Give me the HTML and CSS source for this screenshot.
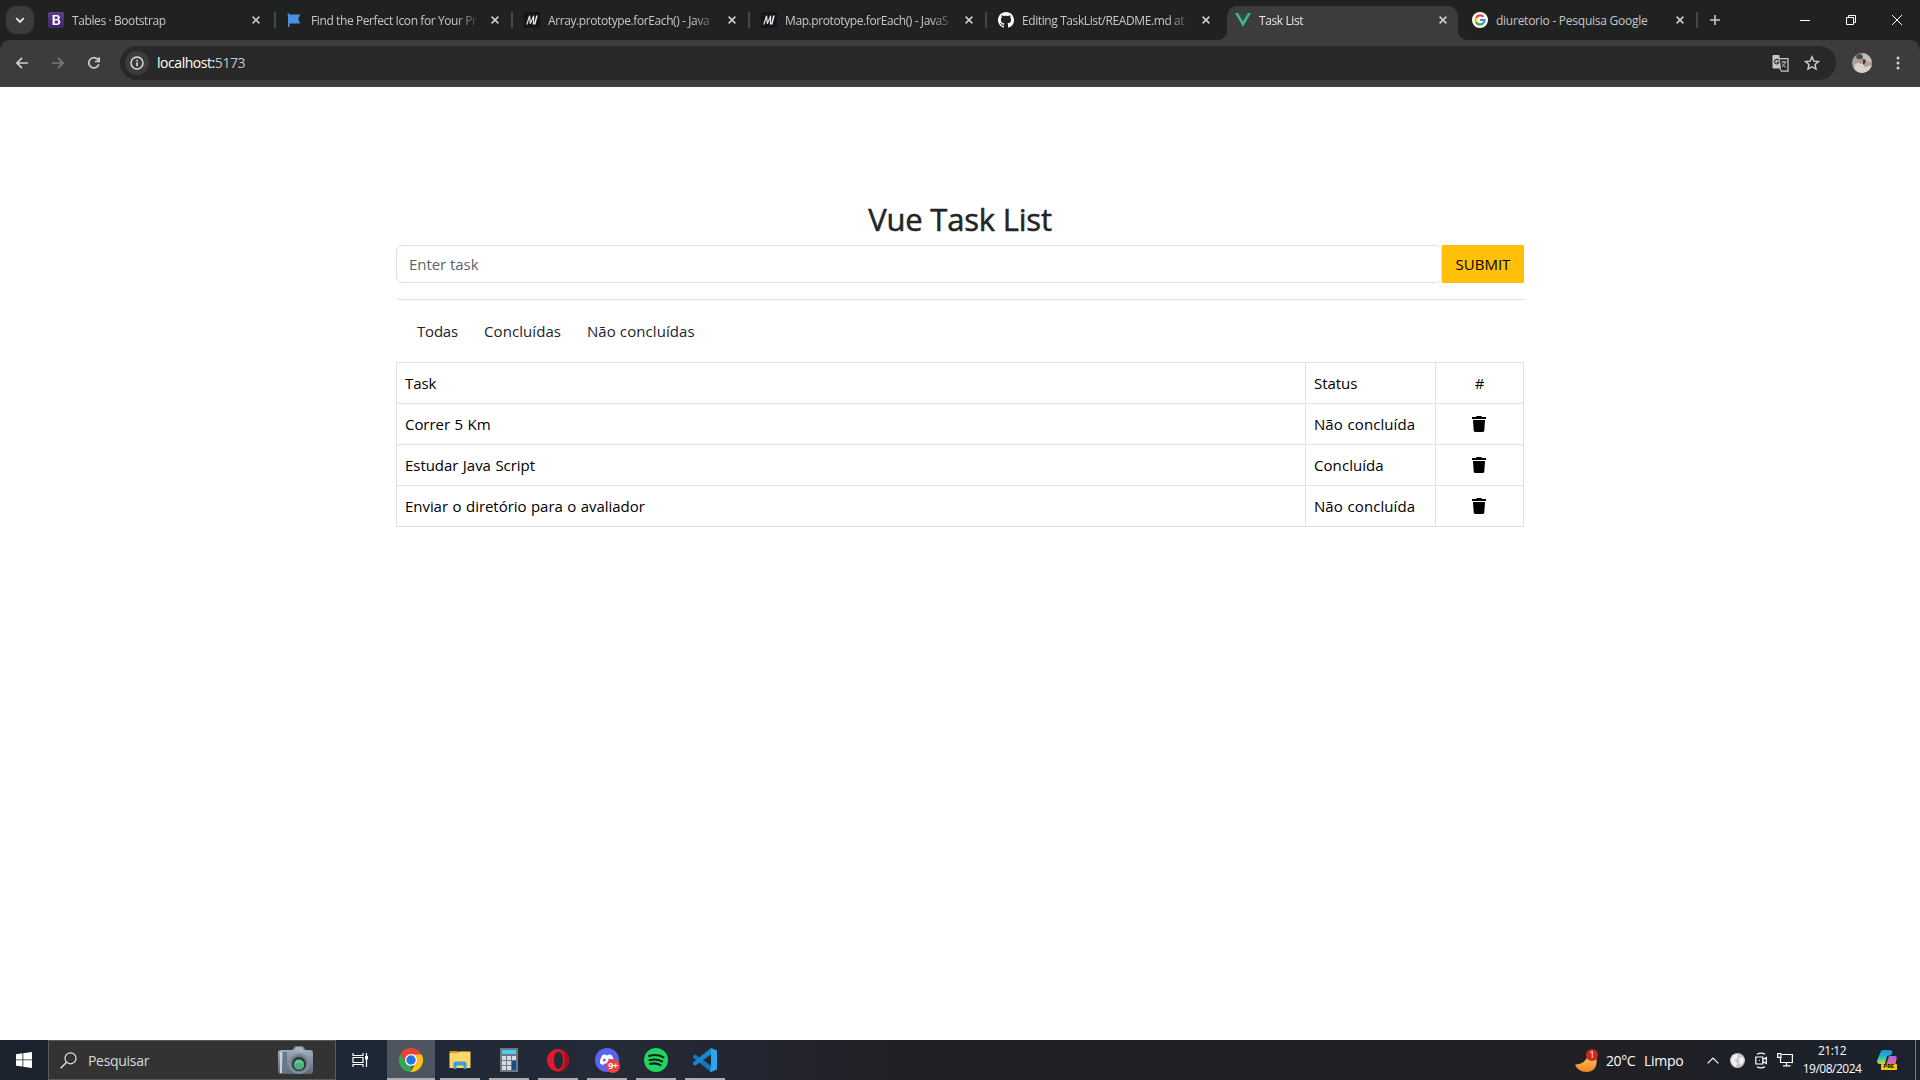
FILE: index.html
```html
<!DOCTYPE html>
<html lang="pt-BR">
<head>
<meta charset="utf-8">
<title>Task List</title>
<link rel="stylesheet" href="styles.css">
</head>
<body>
<svg class="defs" width="0" height="0" aria-hidden="true">
  <symbol id="x" viewBox="0 0 8 8"><path d="M.6.6l6.8 6.8M7.4.6L.6 7.4" stroke="currentColor" stroke-width="1.5" fill="none"/></symbol>
  <symbol id="mdn" viewBox="0 0 16 16"><path fill="#15141a" d="M0 0h16v16H0z"/><path d="M2.800 12.500L5.600 3.800 6.300 11.800 9.700 3.800 9.400 12.500" fill="none" stroke="#e4e4e4" stroke-width="1.200"/><path d="M10.600 12.500L13 3.500" fill="none" stroke="#f1f1f1" stroke-width="1.500"/></symbol>
  <symbol id="trash" viewBox="0 0 14 16"><path d="M4.2.6C4.4.2 4.700 0 5.200 0h3.600c.5 0 .8.2 1 .6L10 1h4v2H0V1h4zM1 4h12l-.7 10.600c0 .8-.7 1.400-1.500 1.400H3.200c-.8 0-1.500-.6-1.500-1.400z"/></symbol>
</svg>
<header class="tabstrip">
  <div class="tab-search"><svg width="10" height="7" viewBox="0 0 10 7"><path d="M1.200 1.200L5 5l3.800-3.800" fill="none" stroke="#e3e3e3" stroke-width="1.900"/></svg></div>
  <div class="tabs">
    <div class="tab first"><svg class="fav" viewBox="0 0 16 16"><defs><linearGradient id="bs" x2="0" y2="1"><stop stop-color="#5f4090"/><stop offset="1" stop-color="#3d2266"/></linearGradient></defs><rect width="16" height="16" rx="1" fill="url(#bs)"/><path fill="#fff" fill-rule="evenodd" d="M4.600 3h4.200c1.900 0 3 .9 3 2.500 0 1-.6 1.800-1.500 2.100 1.200.3 2 1.200 2 2.400 0 1.900-1.300 3-3.500 3H4.600zM6.700 4.600v2.400h1.500c1 0 1.600-.4 1.600-1.200S9.300 4.600 8.300 4.600zM6.700 8.500v2.900h1.800c1.100 0 1.700-.5 1.700-1.500s-.6-1.400-1.700-1.400z"/></svg><span class="label">Tables · Bootstrap</span><svg class="close"><use href="#x"/></svg></div>
    <div class="tab"><svg class="fav" viewBox="0 0 16 16"><path fill="#4a90e2" d="M.7 1.500c1-.5 1.800 0 1.800 1h10.700l-2 4.500 2 4.500H2.500V15h-1.500V3.200C.2 2.700.2 1.900.7 1.500z"/></svg><span class="label">Find the Perfect Icon for Your Pr</span><svg class="close"><use href="#x"/></svg></div>
    <div class="tab"><svg class="fav"><use href="#mdn"/></svg><span class="label">Array.prototype.forEach() - Java</span><svg class="close"><use href="#x"/></svg></div>
    <div class="tab"><svg class="fav"><use href="#mdn"/></svg><span class="label">Map.prototype.forEach() - JavaS</span><svg class="close"><use href="#x"/></svg></div>
    <div class="tab plain"><svg class="fav" viewBox="0 0 16 16"><path fill="#fff" d="M8 0C3.580 0 0 3.580 0 8c0 3.540 2.290 6.530 5.470 7.590.4.070.55-.17.55-.38 0-.19-.01-.82-.01-1.490-2.010.37-2.530-.49-2.690-.94-.09-.23-.48-.94-.82-1.130-.28-.15-.68-.52-.01-.53.63-.01 1.080.58 1.230.82.72 1.210 1.870.87 2.330.66.070-.52.28-.87.510-1.070-1.780-.2-3.640-.89-3.640-3.950 0-.87.310-1.590.82-2.150-.08-.2-.36-1.020.08-2.120 0 0 .67-.21 2.200.82.640-.18 1.320-.27 2-.27s1.360.09 2 .27c1.530-1.040 2.200-.82 2.200-.82.440 1.100.160 1.920.080 2.120.510.560.820 1.270.820 2.150 0 3.070-1.870 3.750-3.650 3.950.290.250.540.730.540 1.480 0 1.070-.01 1.930-.01 2.200 0 .21.150.46.550.38A8.010 8.010 0 0 0 16 8c0-4.420-3.580-8-8-8z"/></svg><span class="label">Editing TaskList/README.md at</span><svg class="close"><use href="#x"/></svg></div>
    <div class="tab active"><svg class="fav" viewBox="0 0 16 16"><path fill="#41b883" d="M0 1h3.200L8 9.300 12.800 1H16L8 14.800z"/><path fill="#34495e" d="M3.200 1h3L8 4.200 9.800 1h3L8 9.300z"/></svg><span class="label">Task List</span><svg class="close"><use href="#x"/></svg></div>
    <div class="tab"><svg class="fav" viewBox="0 0 16 16"><circle cx="8" cy="8" r="8" fill="#fff"/><g fill="none" stroke-width="2.200"><path stroke="#ea4335" d="M4 5.900A4.600 4.600 0 0 1 11.400 4.800"/><path stroke="#fbbc05" d="M4 10.200A4.700 4.700 0 0 1 4 5.800"/><path stroke="#34a853" d="M4 10.100A4.600 4.600 0 0 0 11 11.400"/><path stroke="#4285f4" d="M8 8h4.500a4.600 4.600 0 0 1-1.600 3.500"/></g></svg><span class="label wide">diuretorio - Pesquisa Google</span><svg class="close"><use href="#x"/></svg></div>
  </div>
  <svg class="newtab" width="10" height="10" viewBox="0 0 10 10"><path d="M5 0v10M0 5h10" stroke="#c7c7c7" stroke-width="1.600"/></svg>
  <div class="winctl">
    <svg width="10" height="10" viewBox="0 0 10 10"><path d="M0 5.500h10"/></svg>
    <svg width="10" height="10" viewBox="0 0 10 10"><path d="M.5 2.500h7v7h-7zM2.500 2.500v-2h7v7h-2"/></svg>
    <svg width="10" height="10" viewBox="0 0 10 10"><path d="M0 0l10 10M10 0L0 10"/></svg>
  </div>
</header>
<div class="toolbar-wrap"><div class="toolbar">
  <div class="nav-icons">
    <svg width="12" height="12" viewBox="0 0 12 12"><path d="M12 6H1M6 .8L.9 6 6 11.200" stroke="#d0d0d0"/></svg>
    <svg width="12" height="12" viewBox="0 0 12 12"><path d="M0 6h11M6 .8L11.100 6 6 11.200" stroke="#7b7b7b"/></svg>
    <svg width="12" height="12" viewBox="0 0 12 12"><path d="M10.800 7.300A5.100 5.100 0 1 1 10 2.800L11.200 4.200M11.200.2v4.300H7" stroke="#d0d0d0"/></svg>
  </div>
  <div class="omnibox">
    <span class="info"><svg width="14" height="14" viewBox="0 0 14 14"><circle cx="7" cy="7" r="6" fill="none" stroke="#e0e0e0" stroke-width="1.400"/><path d="M7 6.200V10.300M7 3.700v1.500" stroke="#e0e0e0" stroke-width="1.500"/></svg></span>
    <span class="url">localhost:<i>5173</i></span>
    <svg class="translate" width="17" height="17" viewBox="0 0 17 17"><path d="M1.500 0h5.800L9 13.500H1.500Q.5 13.500 .5 12.500V1Q.5 0 1.500 0z" fill="#c7c7c7"/><path d="M8 3.700h8v12.500H9.500L8 13.500" fill="none" stroke="#c7c7c7" stroke-width="1.300"/><path d="M6.700 5.300A2.300 2.300 0 1 0 7 7.400H4.800" fill="none" stroke="#333" stroke-width="1.200"/><path d="M9.500 7H14.500M11.900 5.800v1.200M13.500 7.200Q12.500 9.800 10 12M10.300 8.500Q11.500 11 14 12.500" fill="none" stroke="#c7c7c7"/></svg>
    <svg class="star" width="16" height="16" viewBox="0 0 16 16"><path d="M8 1.800l1.800 4.300 4.700.4-3.500 3 1 4.600L8 11.700l-4 2.400 1-4.600-3.500-3 4.700-.4z" fill="none" stroke="#d0d0d0" stroke-width="1.400"/></svg>
  </div>
  <svg class="avatar" width="20" height="20" viewBox="0 0 20 20"><defs><clipPath id="av"><circle cx="10" cy="10" r="10"/></clipPath></defs><g clip-path="url(#av)"><path fill="#aaa39c" d="M0 0h20v20H0z"/><path fill="#c4beb7" d="M11 0h9v9h-9z"/><path fill="#d8d1cc" d="M3 11l6-2 4 5 7-2v8H2z"/><path fill="#4a4c58" d="M4 3q3-4 7 0l-1 4-5-1z"/><path fill="#b98f7b" d="M6 6l4 0 1 4-3 1z"/><path fill="#393b43" d="M11 6l3 1-1 5-2-1z"/><path fill="#c39983" d="M12 11l4-3 1 3-3 3z"/></g></svg>
  <svg class="dots" width="4" height="14" viewBox="0 0 4 14"><g fill="#d0d0d0"><circle cx="2" cy="2" r="1.500"/><circle cx="2" cy="7" r="1.500"/><circle cx="2" cy="12" r="1.500"/></g></svg>
</div></div>
<main class="page">
  <div class="container">
    <h2>Vue Task List</h2>
    <div class="entry"><input class="field" type="text" placeholder="Enter task"><button class="submit">SUBMIT</button></div>
    <hr>
    <nav class="filters"><a class="f1">Todas</a><a class="f2">Concluídas</a><a class="f3">Não concluídas</a></nav>
    <table>
      <colgroup><col class="c1"><col class="c2"><col class="c3"></colgroup>
      <tr><td>Task</td><td>Status</td><td class="mid">#</td></tr>
      <tr><td>Correr 5 Km</td><td class="status">Não concluída</td><td class="mid"><svg class="bin"><use href="#trash"/></svg></td></tr>
      <tr><td>Estudar Java Script</td><td class="status">Concluída</td><td class="mid"><svg class="bin"><use href="#trash"/></svg></td></tr>
      <tr><td>Enviar o diretório para o avaliador</td><td class="status">Não concluída</td><td class="mid"><svg class="bin"><use href="#trash"/></svg></td></tr>
    </table>
  </div>
</main>
<footer class="taskbar">
  <div class="start"><svg width="16" height="16" viewBox="0 0 16 16"><path fill="#fff" d="M0 2.200L6.500 1.300v6.200H0zM7.300 1.200L16 0v7.500H7.300zM0 8.300h6.500v6.300L0 13.700zM7.300 8.300H16V16l-8.700-1.200z"/></svg></div>
  <div class="search">
    <svg width="17" height="17" viewBox="0 0 17 17"><circle cx="10.500" cy="6.300" r="5.500" fill="none" stroke="#e6e6e6" stroke-width="1.200"/><path d="M6.600 10.300L.6 16.300" stroke="#e6e6e6" stroke-width="1.300"/></svg>
    <span>Pesquisar</span>
    <svg class="camera" width="37" height="30" viewBox="0 0 37 30"><defs><linearGradient id="cam" x2="0" y2="1"><stop stop-color="#a0adbc"/><stop offset="1" stop-color="#5d6878"/></linearGradient></defs><path fill="#6c7887" d="M14 6L18 1h8l4 6z"/><rect x="1" y="5" width="35" height="24" rx="3" fill="url(#cam)"/><rect x="3" y="7" width="2" height="21" fill="#c8d0d8"/><rect x="6" y="7" width="4" height="21" fill="#687789"/><path fill="#a8b3bf" d="M16 6l3-4h6l3 5z"/><circle cx="22" cy="18.500" r="10.500" fill="#8593a1"/><circle cx="22" cy="18.500" r="8.800" fill="#707d89"/><circle cx="22" cy="19" r="7" fill="#26343b"/><circle cx="22" cy="19.500" r="5.300" fill="#4dae7c"/><path fill="#6dc697" d="M18 19a4 4 0 0 1 8 0q-4-3-8 0z"/></svg>
  </div>
  <div class="taskview"><svg width="17" height="16" viewBox="0 0 17 16"><path d="M1 1v2.500h10V1M1 15v-2.500h10V15M1 5.500h10v5H1zM14.500 1v14" fill="none" stroke="#fff" stroke-width="1.200"/><path fill="#fff" d="M13 4h3v3.500h-3z"/></svg></div>
  <div class="apps">
    <div class="app current"><svg viewBox="0 0 24 24"><path fill="#ea4335" d="M1.600 6A12 12 0 0 1 22.400 6L12 12z"/><path fill="#34a853" d="M1.600 6l5.600 9L12 17.500 12 24A12 12 0 0 1 1.600 6z"/><path fill="#fbc116" d="M12 6.500h10.700A12 12 0 0 1 11.500 24l5.200-9z"/><path fill="#ea4335" d="M1.600 6H12v4L7 14z"/><circle cx="12" cy="12" r="6" fill="#fff"/><circle cx="12" cy="12" r="4.700" fill="#2575e8"/></svg></div>
    <div class="app"><svg viewBox="0 0 24 24"><path fill="#d99a12" d="M1.500 3h8l1 2h-9z"/><path fill="#ffd867" d="M1.500 5h8l1.500-1.400h11.500V20h-21z"/><path fill="#3f9bdb" d="M5.500 21v-5.500q0-2 2-2h9q2 0 2 2V21h-3v-3.500h-7V21z"/></svg></div>
    <div class="app"><svg viewBox="0 0 24 24"><path fill="#6e7780" d="M3 0h18v24H3z"/><path fill="#48cdf0" d="M5 2h14v4H5z"/><path fill="#d7dde2" d="M5 8h4v4H5zm5 0h4v4h-4zm5 0h4v4h-4zM5 13h4v4H5zm5 0h4v4h-4zM5 18h4v4H5zm5 0h4v4h-4z"/><path fill="#144d8c" d="M15 13h4v9h-4z"/></svg></div>
    <div class="app"><svg viewBox="0 0 24 24"><path fill-rule="evenodd" fill="#e8182c" d="M12 1c6 0 11 5 11 11s-5 11.500-11 11.500S1 18 1 12 6 1 12 1zm.5 2.500C9.500 3.500 8 8 8 12s1.500 9 4.500 9S17 16 17 12s-1.500-8.500-4.500-8.500z"/><path fill="#a70f20" d="M12.500 1.200C19 1.500 23 6 23 12s-4.500 11-10.500 11.300c4-1 6-5 6-11.300s-2-10-6-10.800z"/></svg></div>
    <div class="app discord"><svg viewBox="0 0 24 24"><circle cx="12" cy="12" r="12" fill="#5865f2"/><path fill="#fff" d="M7 7.500q2-1.200 3.200-1.300l.6 1h2.400l.6-1q1.700.2 3.200 1.300 2.300 4 2 8-1.600 1.200-3.400 1.600l-1-1.600H9.400l-1 1.600Q6.600 16.700 5 15.500q-.3-4 2-8z"/><ellipse cx="9.300" cy="12" rx="1.400" ry="1.600" fill="#5865f2"/><ellipse cx="14.700" cy="12" rx="1.400" ry="1.600" fill="#5865f2"/></svg><b>9+</b></div>
    <div class="app"><svg viewBox="0 0 24 24"><circle cx="12" cy="12" r="12" fill="#1ed760"/><path d="M5 8q8-2.500 14.500 1.300M5.500 12.200q7-2 12.500 1.200M6 16q6-1.600 10.500 1.200" fill="none" stroke="#11191c" stroke-width="2.100" stroke-linecap="round"/></svg></div>
    <div class="app"><svg viewBox="0 0 24 24"><path fill="#1277bb" d="M0 8l2-1.700L18 17.500V24L0 9.500z"/><path fill="#1689d2" d="M0 16l2 1.700L18 6.500V0L0 14.500z"/><path fill="#29a6ee" d="M18 0l6 2.500v19L18 24q-.8 0-1-.8L18 20V4z"/></svg></div>
  </div>
  <div class="tray">
    <div class="weather"><svg width="23" height="23" viewBox="0 0 23 23"><defs><linearGradient id="mo" x2="0" y2="1"><stop stop-color="#ffd162"/><stop offset="1" stop-color="#ef8426"/></linearGradient></defs><path fill="url(#mo)" d="M0 15.500Q10 16 13.500 5L21.500 9Q23 22.500 11.500 23 3 23 0 15.500z"/><circle cx="17" cy="6" r="6" fill="#c92a24"/></svg><em>1</em></div>
    <span class="temp">20°C</span><span class="cond">Limpo</span>
    <svg class="up" width="12" height="7" viewBox="0 0 12 7"><path d="M.6 6.400L6 1l5.400 5.400" fill="none" stroke="#fff" stroke-width="1.200"/></svg>
    <svg class="globe" width="15" height="15" viewBox="0 0 15 15"><circle cx="7.500" cy="7.500" r="7.500" fill="#c9c9c9"/><path fill="#f1f1f1" d="M3 2l5 0-1 4-3 1 3 3-1 4Q2 12 1 7zM9 5l4-1 1 4-3 4-2-3z"/></svg>
    <svg class="cam" width="12" height="17" viewBox="0 0 12 17"><path d="M.8 5h7v7h-7zM7.800 7.500l3.500-2v6l-3.500-2M2 2.200Q6 0 10 2.200M2 14.800Q6 17 10 14.800M4 8.500h1" fill="none" stroke="#fff" stroke-width="1.200"/></svg>
    <svg class="net" width="16" height="14" viewBox="0 0 16 14"><path d="M5 1.500h10.400v8H3.500V5M9.500 9.500v3M6 12.900h7.500M.6.600h3.400v3.800H.6z" fill="none" stroke="#fff" stroke-width="1.200"/></svg>
    <div class="clock"><span class="time">21:12</span><span class="date">19/08/2024</span></div>
    <div class="copilot"><svg width="20" height="17" viewBox="0 0 20 17"><defs><linearGradient id="c1" x2="0" y2="1"><stop stop-color="#168bea"/><stop offset=".6" stop-color="#35c7ad"/><stop offset="1" stop-color="#cadb36"/></linearGradient><linearGradient id="c2" x2="0" y2="1"><stop stop-color="#a265f0"/><stop offset="1" stop-color="#f16d7d"/></linearGradient></defs><path fill="url(#c1)" d="M6 0h7q2 0 2.500 2L14 5 10 6 8 14H3Q0 14 0 11L3.500 2Q4 0 6 0z"/><path fill="url(#c2)" d="M12 6h6q2 0 1.800 2L18.500 14h-9z"/></svg><small>PRE</small></div>
  </div>
</footer>
</body>
</html>
```
FILE: styles.css
```css
* { box-sizing: border-box; }
body { margin: 0; width: 1920px; height: 1080px; overflow: hidden; display: flex; flex-direction: column; background: #fff; font-family: "Open Sans", "Noto Sans", sans-serif; }
svg { display: block; flex: none; }
.defs { position: absolute; }

.tabstrip { height: 40px; flex: none; background: #202221; display: flex; align-items: center; padding-left: 6px; }
.tab-search { width: 28px; height: 28px; border-radius: 10px; background: #3c3c3c; display: grid; place-items: center; margin-right: 4px; }
.tabs { display: flex; height: 40px; }
.tab { width: 237px; height: 40px; padding: 0 13px 0 12px; display: flex; align-items: center; position: relative; color: #c7c7c7; font-size: 12px; }
.tab.first { padding: 0 15px 0 10px; }
.tab::after { content: ""; position: absolute; right: -1px; top: 12px; width: 2px; height: 16px; background: #444746; }
.tab.plain::after { display: none; }
.fav { width: 16px; height: 16px; margin-right: 8px; }
.label { width: 166px; margin-right: 14px; white-space: nowrap; letter-spacing: -.4px; line-height: 20px; padding-top: 1px; -webkit-mask-image: linear-gradient(90deg, #000 146px, transparent 170px); mask-image: linear-gradient(90deg, #000 146px, transparent 170px); }
.label.wide { letter-spacing: -.25px; -webkit-mask-image: none; mask-image: none; }
.close { width: 8px; height: 8px; color: #d0d0d0; }
.tab.active { color: #e8e8e8; z-index: 0; }
.tab.active::before { content: ""; position: absolute; z-index: -1; left: 4px; right: 2px; top: 6px; bottom: 0; background: #3c3c3c; border-radius: 10px 10px 0 0; }
.tab.active::after { left: -6px; right: -8px; top: 30px; width: auto; height: 10px; z-index: -1; background: radial-gradient(circle at 0 0, transparent 10px, #3c3c3c 10.500px) left / 10px 10px no-repeat, radial-gradient(circle at 100% 0, transparent 10px, #3c3c3c 10.500px) right / 10px 10px no-repeat; }
.newtab { margin-left: 13px; }
.winctl { margin-left: auto; margin-right: 18px; display: flex; gap: 36px; }
.winctl path { fill: none; stroke: #fff; stroke-width: 1; }

.toolbar-wrap { height: 47px; flex: none; background: #202221; }
.toolbar { height: 47px; background: #3c3c3c; border-bottom: 1px solid #474747; border-radius: 10px 10px 0 0; display: flex; align-items: center; padding-left: 16px; }
.nav-icons { display: flex; gap: 24px; margin-right: 20px; }
.nav-icons path { fill: none; stroke-width: 1.700; }
.omnibox { width: 1716px; height: 34px; border-radius: 17px; background: #282828; display: flex; align-items: center; padding: 0 16px 0 5px; }
.info { width: 24px; height: 24px; border-radius: 50%; background: #3c3c3c; display: grid; place-items: center; margin-right: 8px; }
.url { color: #fff; font-size: 14px; letter-spacing: -.45px; padding-bottom: 1px; }
.url i { font-style: normal; color: #c7c7c7; }
.translate { margin-left: auto; margin-right: 15px; }
.avatar { margin-left: 16px; }
.dots { margin-left: 24px; }

.page { flex: 1; display: flex; justify-content: center; align-items: flex-start; }
.container { width: 1128px; padding-top: 113px; }
h2 { margin: 0 0 7px; text-align: center; font-size: 31px; line-height: 38px; font-weight: 500; letter-spacing: -.2px; color: #212529; -webkit-text-stroke: .5px #212529; }
.entry { display: flex; height: 38px; }
.field { flex: 1; min-width: 0; height: 38px; border: 1px solid #dee2e6; border-radius: 6px; padding: 0 12px; font: 15px "Open Sans", sans-serif; letter-spacing: -.05px; }
.field::placeholder { color: #5c636a; opacity: 1; }
.submit { width: 82px; height: 38px; padding: 0; border: 0; background: #ffc107; color: #000; font: 15px "Open Sans", sans-serif; letter-spacing: 0; }
hr { margin: 16px 0 0 1px; border: 0; border-top: 1px solid #dee0e2; }
.filters { height: 62px; display: flex; align-items: center; padding: 0 0 1px 21px; font-size: 15px; letter-spacing: .08px; color: #212529; }
.f1 { width: 67px; letter-spacing: -.2px; }
.f2 { width: 103px; }
table { width: 1128px; table-layout: fixed; border-collapse: collapse; font-size: 15px; letter-spacing: -.05px; word-spacing: .7px; color: #000; }
.c1 { width: 909px; }
.c2 { width: 130px; }
.c3 { width: 88px; }
td { height: 41px; padding: 0 8px; border: 1px solid #dee2e6; line-height: 24px; white-space: nowrap; }
.status { letter-spacing: .07px; }
.mid { text-align: center; }
.bin { width: 14px; height: 16px; margin: 0 auto 0 28px; }

.taskbar { height: 40px; flex: none; display: flex; background: linear-gradient(90deg, #1c222d 0, #1d2834 18%, #252b38 32%, #232530 39%, #201f24 48%, #201f23 83%, #1b222e 100%); color: #fff; }
.start { width: 48px; display: grid; place-items: center; }
.search { width: 288px; height: 40px; border: 1px solid #5b5b5b; background: #333; display: flex; align-items: center; padding-left: 11px; font-size: 14px; color: #dadada; }
.search span { margin-left: 11px; letter-spacing: -.3px; }
.camera { margin-left: auto; margin-right: 21px; }
.taskview { width: 51px; display: grid; place-items: center; padding-right: 2px; }
.apps { display: flex; gap: 9px; }
.app { width: 40px; height: 40px; border-bottom: 2px solid #b0adb3; display: grid; place-items: center; padding-top: 2px; position: relative; }
.app svg { width: 24px; height: 24px; }
.app.current { width: 48px; background: #4d565f; margin-right: -4px; }
.discord b { position: absolute; left: 19px; top: 19px; width: 14px; height: 14px; border-radius: 50%; background: #ed4245; font-size: 9px; line-height: 14px; text-align: center; letter-spacing: -.5px; }
.tray { margin-left: auto; display: flex; align-items: center; width: 345px; font-size: 14px; }
.weather { position: relative; width: 23px; height: 23px; }
.weather em { position: absolute; left: 11px; top: 0; width: 12px; font: 9px/12px "Open Sans", sans-serif; text-align: center; }
.temp { width: 38px; margin-left: 8px; letter-spacing: -.4px; }
.cond { width: 63px; letter-spacing: -.3px; white-space: nowrap; }
.globe { margin-left: 11px; }
.cam { margin-left: 10px; }
.net { margin-left: 10px; }
.clock { width: 58px; margin-left: 10px; height: 40px; display: flex; flex-direction: column; align-items: center; font-size: 12px; line-height: 18px; padding-top: 2px; letter-spacing: -.5px; }
.copilot { position: relative; margin-left: 16px; width: 20px; height: 20px; }
.copilot small { position: absolute; left: 4px; bottom: 0; width: 16px; height: 6px; background: #ffc400; border-radius: 1px; color: #000; font: bold 6px/6px "Liberation Mono", monospace; text-align: center; }
.tray::after { content: ""; width: 1px; height: 40px; background: #777b83; margin-left: auto; margin-right: 4px; }
```
